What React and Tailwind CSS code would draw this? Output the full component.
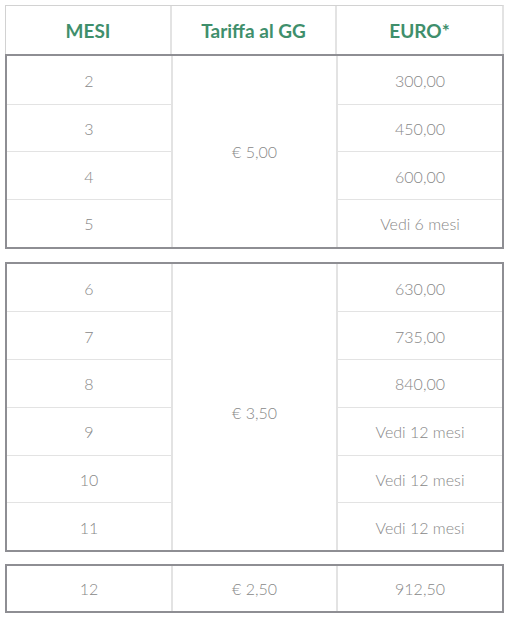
import React from "react";

const groups = [
  { tariff: "€ 5,00", rows: [["2", "300,00"], ["3", "450,00"], ["4", "600,00"], ["5", "Vedi 6 mesi"]], tp: "pt-[2px]" },
  { tariff: "€ 3,50", rows: [["6", "630,00"], ["7", "735,00"], ["8", "840,00"], ["9", "Vedi 12 mesi"], ["10", "Vedi 12 mesi"], ["11", "Vedi 12 mesi"]], tp: "pt-[12px]" },
  { tariff: "€ 2,50", rows: [["12", "912,50"]], short: true, tp: "pt-[2px]" },
];

function Group({ g }) {
  const h = g.short ? "h-[45px]" : "h-[47.7px]";
  return (
    <div className="grid grid-cols-[166px_165px_1fr] border-2 border-[#8e8e93] bg-white">
      <div className="flex flex-col border-r-2 border-[#e3e3e3]">
        {g.rows.map((r, i) => (
          <div
            key={i}
            className={`flex items-center justify-center pt-[2px] ${h} ${i > 0 ? "border-t border-[#e3e3e3]" : ""}`}
          >
            {r[0]}
          </div>
        ))}
      </div>
      <div className={`flex items-center justify-center ${g.tp} border-r-2 border-[#e3e3e3]`}>{g.tariff}</div>
      <div className="flex flex-col">
        {g.rows.map((r, i) => (
          <div
            key={i}
            className={`flex items-center justify-center pt-[2px] ${h} ${i > 0 ? "border-t border-[#e3e3e3]" : ""}`}
          >
            {r[1]}
          </div>
        ))}
      </div>
    </div>
  );
}

export default function App() {
  return (
    <div className="w-[508px] h-[619px] bg-white pl-[5px] pt-[5px] pr-[4px] font-['Lato','Liberation_Sans',sans-serif] text-[16px] font-light text-[#888888]">
      <div className="w-[499px]">
        <div className="grid grid-cols-[166px_165px_1fr] h-[49px] border-t border-l border-[#d2d2d2] border-r-2 border-r-[#e3e3e3] text-[19px] font-bold text-[#3f8f6c]">
          <div className="flex items-center justify-center pt-[2px] border-r-2 border-[#e3e3e3]">MESI</div>
          <div className="flex items-center justify-center pt-[2px] border-r-2 border-[#e3e3e3]">Tariffa al GG</div>
          <div className="flex items-center justify-center pt-[2px]">EURO*</div>
        </div>
        <div className="flex flex-col">
          <Group g={groups[0]} />
          <div className="h-[13px]" />
          <Group g={groups[1]} />
          <div className="h-[12px]" />
          <Group g={groups[2]} />
        </div>
      </div>
    </div>
  );
}
